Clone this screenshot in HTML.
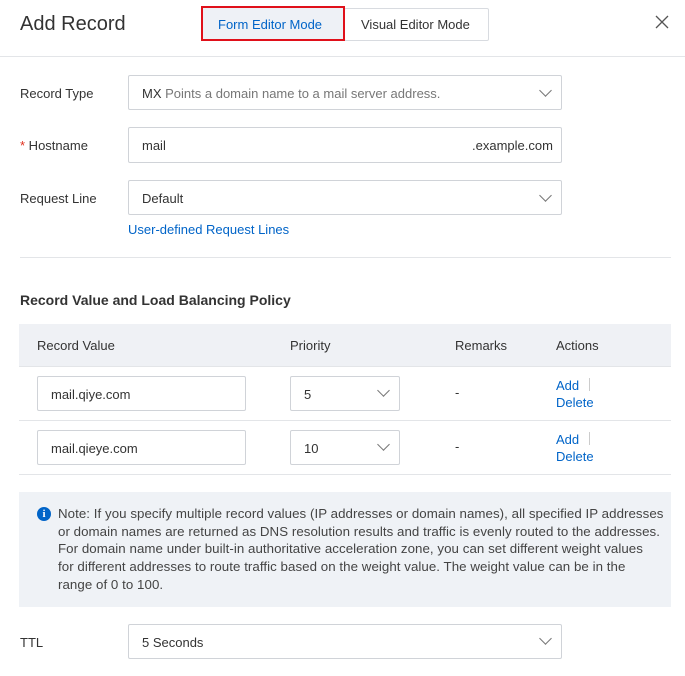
<!DOCTYPE html><html><head><style>
body{margin:0;width:685px;height:676px;background:#fff;font-family:"Liberation Sans",sans-serif;font-size:13px;color:#333;position:relative;overflow:hidden}
.a{position:absolute}
.box{position:absolute;border:1px solid #d0d3d8;border-radius:2px;box-sizing:border-box;background:#fff}
.t{position:absolute;white-space:nowrap}
.chev{position:absolute;width:8px;height:8px;border-right:1.3px solid #777;border-bottom:1.3px solid #777;transform:rotate(45deg)}
.lnk{color:#0064c8}
</style></head><body>
<div class="t" style="left:20px;top:13px;font-size:20px;color:#333">Add Record</div>
<div class="box" style="left:344px;top:8px;width:145px;height:33px;border-color:#d8dbe0"></div>
<div class="t" style="left:361px;top:17px">Visual Editor Mode</div>
<div class="a" style="left:201px;top:6px;width:144px;height:35px;box-sizing:border-box;border:2px solid #e0101a;background:#eef1f6"></div>
<div class="t" style="left:218px;top:17px;color:#0064c8">Form Editor Mode</div>
<svg class="a" style="left:655px;top:15px" width="14" height="14" viewBox="0 0 14 14"><path d="M1 1L13 13M13 1L1 13" stroke="#555" stroke-width="1.3" fill="none"/></svg>
<div class="a" style="left:0;top:56px;width:685px;height:1px;background:#e3e5e8"></div>

<div class="t" style="left:20px;top:86px">Record Type</div>
<div class="box" style="left:128px;top:75px;width:434px;height:35px"></div>
<div class="t" style="left:142px;top:86px;color:#333">MX <span style="color:#777">Points a domain name to a mail server address.</span></div>
<div class="chev" style="left:541px;top:86px"></div>

<div class="t" style="left:20px;top:138px"><span style="color:#e0301e">*</span> Hostname</div>
<div class="box" style="left:128px;top:127px;width:434px;height:36px"></div>
<div class="t" style="left:142px;top:138px">mail</div>
<div class="t" style="left:472px;top:138px">.example.com</div>

<div class="t" style="left:20px;top:191px">Request Line</div>
<div class="box" style="left:128px;top:180px;width:434px;height:35px"></div>
<div class="t" style="left:142px;top:191px">Default</div>
<div class="chev" style="left:541px;top:191px"></div>
<div class="t lnk" style="left:128px;top:222px">User-defined Request Lines</div>
<div class="a" style="left:20px;top:257px;width:651px;height:1px;background:#e3e5e8"></div>

<div class="t" style="left:20px;top:292px;font-size:14px;font-weight:bold;color:#333">Record Value and Load Balancing Policy</div>
<div class="a" style="left:19px;top:324px;width:652px;height:42px;background:#eff1f5;border-bottom:1px solid #e3e5e8"></div>
<div class="t" style="left:37px;top:338px">Record Value</div>
<div class="t" style="left:290px;top:338px">Priority</div>
<div class="t" style="left:455px;top:338px">Remarks</div>
<div class="t" style="left:556px;top:338px">Actions</div>

<div class="box" style="left:37px;top:376px;width:209px;height:35px"></div>
<div class="t" style="left:51px;top:387px">mail.qiye.com</div>
<div class="box" style="left:290px;top:376px;width:110px;height:35px"></div>
<div class="t" style="left:304px;top:387px">5</div>
<div class="chev" style="left:379px;top:386px"></div>
<div class="t" style="left:455px;top:385px">-</div>
<div class="t lnk" style="left:556px;top:378px">Add</div>
<div class="a" style="left:589px;top:378px;width:1px;height:13px;background:#ccc"></div>
<div class="t lnk" style="left:556px;top:395px">Delete</div>
<div class="a" style="left:19px;top:420px;width:652px;height:1px;background:#e3e5e8"></div>

<div class="box" style="left:37px;top:430px;width:209px;height:35px"></div>
<div class="t" style="left:51px;top:441px">mail.qieye.com</div>
<div class="box" style="left:290px;top:430px;width:110px;height:35px"></div>
<div class="t" style="left:304px;top:441px">10</div>
<div class="chev" style="left:379px;top:440px"></div>
<div class="t" style="left:455px;top:439px">-</div>
<div class="t lnk" style="left:556px;top:432px">Add</div>
<div class="a" style="left:589px;top:432px;width:1px;height:13px;background:#ccc"></div>
<div class="t lnk" style="left:556px;top:449px">Delete</div>
<div class="a" style="left:19px;top:474px;width:652px;height:1px;background:#e3e5e8"></div>

<div class="a" style="left:19px;top:492px;width:652px;height:115px;background:#eff2f6"></div>
<div class="a" style="left:37px;top:507px;width:14px;height:14px;border-radius:50%;background:#0064c8;color:#fff;font-size:11px;font-weight:bold;text-align:center;line-height:14px;font-family:'Liberation Serif',serif">i</div>
<div class="a" style="left:58px;top:505px;white-space:nowrap;font-size:13.3px;letter-spacing:0.05px;line-height:17.7px;color:#444">Note: If you specify multiple record values (IP addresses or domain names), all specified IP addresses<br>or domain names are returned as DNS resolution results and traffic is evenly routed to the addresses.<br>For domain name under built-in authoritative acceleration zone, you can set different weight values<br>for different addresses to route traffic based on the weight value. The weight value can be in the<br>range of 0 to 100.</div>

<div class="t" style="left:20px;top:635px">TTL</div>
<div class="box" style="left:128px;top:624px;width:434px;height:35px"></div>
<div class="t" style="left:142px;top:635px">5 Seconds</div>
<div class="chev" style="left:541px;top:634px"></div>
</body></html>
